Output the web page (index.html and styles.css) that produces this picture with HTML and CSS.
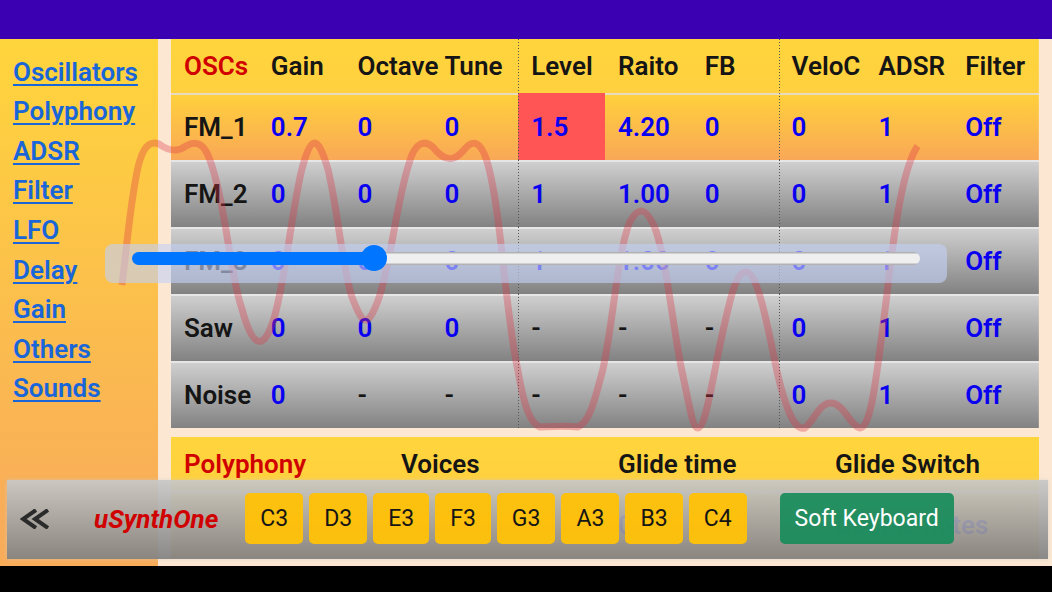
FILE: index.html
```html
<!DOCTYPE html>
<html lang="en">
<head>
    <meta charset="utf-8">
    <meta name="viewport" content="width=device-width, initial-scale=1">
    <title>uSynthOne</title>
    <link rel="stylesheet" href="styles.css">
</head>
<body>
    <div class="status-bar"></div>

    <div class="app">
        <nav class="sidebar">
            <a href="#oscillators">Oscillators</a>
            <a href="#polyphony">Polyphony</a>
            <a href="#adsr">ADSR</a>
            <a href="#filter">Filter</a>
            <a href="#lfo">LFO</a>
            <a href="#delay">Delay</a>
            <a href="#gain">Gain</a>
            <a href="#others">Others</a>
            <a href="#sounds">Sounds</a>
        </nav>

        <main class="content">
            <table class="params oscs" id="oscillators">
                <thead>
                    <tr><th class="title">OSCs</th><th>Gain</th><th>Octave</th><th>Tune</th><th class="group">Level</th><th>Raito</th><th>FB</th><th class="group">VeloC</th><th>ADSR</th><th>Filter</th></tr>
                </thead>
                <tbody>
                    <tr class="active"><th>FM_1</th><td>0.7</td><td>0</td><td>0</td><td class="group selected">1.5</td><td>4.20</td><td>0</td><td class="group">0</td><td>1</td><td>Off</td></tr>
                    <tr><th>FM_2</th><td>0</td><td>0</td><td>0</td><td class="group">1</td><td>1.00</td><td>0</td><td class="group">0</td><td>1</td><td>Off</td></tr>
                    <tr><th>FM_3</th><td>0</td><td>0</td><td>0</td><td class="group">1</td><td>1.00</td><td>0</td><td class="group">0</td><td>1</td><td>Off</td></tr>
                    <tr><th>Saw</th><td>0</td><td>0</td><td>0</td><td class="group none">-</td><td class="none">-</td><td class="none">-</td><td class="group">0</td><td>1</td><td>Off</td></tr>
                    <tr><th>Noise</th><td>0</td><td class="none">-</td><td class="none">-</td><td class="group none">-</td><td class="none">-</td><td class="none">-</td><td class="group">0</td><td>1</td><td>Off</td></tr>
                </tbody>
            </table>

            <table class="params" id="polyphony">
                <thead>
                    <tr><th class="title">Polyphony</th><th>Voices</th><th>Glide time</th><th>Glide Switch</th></tr>
                </thead>
                <tbody>
                    <tr><th></th><td>8</td><td>0.00</td><td>Double notes</td></tr>
                </tbody>
            </table>
        </main>

        <svg class="wave" viewBox="105 39 842 400" preserveAspectRatio="none" aria-hidden="true">
            <path d="M122 285 C127 245 132 185 140 160 C145 144 152 141 159 144 C170 152 178 152 186 146 C196 140 204 143 210 160 C226 205 230 275 242 309 C253 350 265 352 275 315 C286 275 292 210 302 169 C311 137 317 132 328 169 C338 210 342 265 352 297 C363 325 367 329 378 301 C391 265 396 205 409 164 C415 141 425 140 433 147 C445 162 454 162 464 150 C473 139 481 140 488 164 C502 215 505 310 518 370 C524 405 530 423 540 427 C555 427 560 425 578 427 C591 422 596 395 603 370 C614 320 617 255 630 222 C639 207 645 207 654 225 C666 253 672 320 682 370 C690 407 693 428 698 428 C705 428 710 395 719 351 C729 305 735 272 746 272 C757 272 766 315 777 370 C785 405 794 431 805 428 C814 421 820 403 831 403 C844 403 850 425 860 428 C872 428 877 375 887 297 C896 215 905 165 918 146"/>
        </svg>

        <div class="slider-panel">
            <input class="slider" type="range" min="0" max="5" step="0.1" value="1.5" aria-label="FM_1 Level">
        </div>

        <div class="toolbar">
            <button class="collapse" type="button" aria-label="Collapse">
                <svg viewBox="0 0 29 20" width="29" height="20" aria-hidden="true">
                    <path d="M16 1 L3 10 L16 19 M28 1 L15 10 L28 19"/>
                </svg>
            </button>
            <span class="brand">uSynthOne</span>
            <div class="keys">
                <button class="btn key" type="button">C3</button>
                <button class="btn key" type="button">D3</button>
                <button class="btn key" type="button">E3</button>
                <button class="btn key" type="button">F3</button>
                <button class="btn key" type="button">G3</button>
                <button class="btn key" type="button">A3</button>
                <button class="btn key" type="button">B3</button>
                <button class="btn key" type="button">C4</button>
            </div>
            <button class="btn keyboard" type="button">Soft Keyboard</button>
        </div>
    </div>

    <div class="nav-bar"></div>
</body>
</html>
```
FILE: styles.css
```css
* {
    box-sizing: border-box;
}

body {
    display: flex;
    flex-direction: column;
    height: 100vh;
    margin: 0;
    background-color: #fce8d2;
    color: #151515;
    font-family: Roboto, sans-serif;
    font-size: 26px;
    overflow: hidden;
}

.status-bar {
    flex: none;
    height: 39px;
    background-color: #3a00b1;
}

.nav-bar {
    flex: none;
    height: 26px;
    background-color: #000;
}

.app {
    position: relative;
    display: flex;
    flex: 1;
    gap: 13px;
    min-height: 0;
    padding-right: 13px;
    overflow: hidden;
}

/* side menu */
.sidebar {
    display: flex;
    flex: none;
    flex-direction: column;
    width: 158px;
    padding: 13px 13px 158px;
    background: linear-gradient(#ffd53c, #f9ad59 90%);
    font-weight: 600;
}

.sidebar a {
    display: flex;
    flex: 1;
    align-items: center;
    color: #1a66d9;
    text-decoration: underline;
    text-decoration-thickness: 2px;
    text-underline-offset: 3px;
}

/* parameter tables */
.content {
    display: flex;
    flex: 1;
    flex-direction: column;
    gap: 9px;
    min-width: 0;
}

.params {
    width: 100%;
    table-layout: fixed;
    border-collapse: collapse;
}

.params th,
.params td {
    height: 67px;
    padding: 0 0 0 13px;
    font-weight: 600;
    text-align: left;
    white-space: nowrap;
}

.params td {
    color: #0a00f0;
}

.params tr {
    background: linear-gradient(#e6e6e6 2px, #cfcfcf 2px, #828282);
}

.params thead tr {
    background: linear-gradient(#ffd53c, #ffd03f);
}

.params thead th {
    height: 54px;
}

.params .active,
#polyphony tbody tr {
    background: linear-gradient(#e8dcc0 2px, #ffd03c 2px, #f9a857);
}

.params .title {
    color: #d00000;
}

.params .none {
    color: #151515;
}

/* dotted line in front of each column group */
.oscs .group {
    background: repeating-linear-gradient(#555 0 1px, transparent 1px 3px) no-repeat;
    background-size: 1px 100%;
}

.oscs .selected {
    background-color: #ff5555;
}

/* waveform */
.wave {
    position: absolute;
    top: 0;
    left: 10%;
    width: 80%;
    height: 400px;
    pointer-events: none;
}

.wave path {
    fill: none;
    stroke: rgba(220, 53, 69, 0.34);
    stroke-width: 7;
}

/* value slider */
.slider-panel {
    position: absolute;
    top: 205px;
    left: 10%;
    display: flex;
    align-items: flex-start;
    width: 80%;
    height: 39px;
    padding: 1px 27px;
    border-radius: 8px;
    background-color: rgba(195, 208, 245, 0.62);
}

.slider {
    width: 100%;
    height: 26px;
    margin: 0;
    background: none;
    appearance: none;
}

.slider::-webkit-slider-runnable-track {
    height: 13px;
    border-radius: 7px;
    background: linear-gradient(90deg, #0075ff 31%, transparent 31%), linear-gradient(#b2b2b2 1px, #efefef 2px, #efefef 11px, #b2b2b2 12px);
}

.slider::-webkit-slider-thumb {
    width: 26px;
    height: 26px;
    margin-top: -7px;
    border-radius: 50%;
    background-color: #0075ff;
    appearance: none;
}

/* bottom toolbar */
.toolbar {
    position: absolute;
    right: 4px;
    bottom: 7px;
    left: 7px;
    display: flex;
    align-items: center;
    height: 79px;
    padding: 0 13px 2px;
    background: linear-gradient(rgba(200, 200, 200, 0.93), rgba(130, 130, 130, 0.93));
    box-shadow: 0 0 4px rgba(200, 200, 200, 0.6);
}

.collapse {
    display: flex;
    margin-right: 45px;
    padding: 0;
    border: none;
    background: none;
    cursor: pointer;
}

.collapse path {
    fill: none;
    stroke: #2b2b2b;
    stroke-width: 4;
}

.brand {
    margin-right: 27px;
    color: #d00000;
    font-style: italic;
    font-weight: 700;
}

.keys {
    display: flex;
    gap: 6px;
    margin-right: 33px;
}

.btn {
    height: 51px;
    padding: 0 15px;
    border: none;
    border-radius: 5px;
    font-family: inherit;
    font-size: 23px;
    white-space: nowrap;
    cursor: pointer;
}

.key {
    background-color: rgba(255, 193, 7, 0.96);
    color: #151515;
}

.keyboard {
    background-color: rgba(25, 140, 90, 0.93);
    color: #fff;
}
```
